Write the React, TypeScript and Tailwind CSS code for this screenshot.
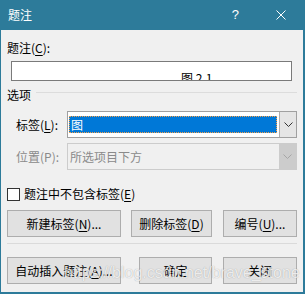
import type { ReactNode } from "react";

const ui = "font-['Noto_Sans_CJK_SC','Noto_Sans',sans-serif]";

function Key({ children }: { children: ReactNode }) {
  return <span className="underline underline-offset-[2px]">{children}</span>;
}

function Chevron({ color }: { color: string }) {
  return (
    <svg width="9" height="5" viewBox="0 0 9 5">
      <path d="M0.5 0.5 L4.5 4.5 L8.5 0.5" fill="none" stroke={color} strokeWidth="1" />
    </svg>
  );
}

function Btn({ className, children }: { className: string; children: ReactNode }) {
  return (
    <div
      className={`h-[27px] flex items-center justify-center bg-[#e1e1e1] border border-[#adadad] text-black ${className}`}
    >
      {children}
    </div>
  );
}

export default function App() {
  return (
    <div
      className={`relative w-[305px] h-[294px] bg-[#2d7b9a] flex flex-col text-[12px] leading-[16px] ${ui}`}
    >
      {/* Title bar */}
      <div className="h-[30px] flex items-center pl-[8px] pr-[19px] text-white">
        <span>题注</span>
        <span className="ml-auto text-[13px] font-['Liberation_Sans',sans-serif]">?</span>
        <svg className="ml-[37px]" width="10" height="10" viewBox="0 0 10 10">
          <path d="M0.5 0.5 L9.5 9.5 M9.5 0.5 L0.5 9.5" stroke="white" strokeWidth="1" />
        </svg>
      </div>

      {/* Body */}
      <div className="flex-1 ml-px mr-[2px] mb-[2px] bg-[#f0f0f0] pl-[6px] pr-[6px] pt-[10px] flex flex-col text-black">
        <div>
          题注(<Key>C</Key>):
        </div>
        <div className="mt-[5px] ml-[4px] mr-[5px] h-[20px] border border-[#7a7a7a] bg-white overflow-hidden pl-[169px] pt-[8px] whitespace-nowrap">
          图 2.1
        </div>

        {/* Options group */}
        <div className="mt-[6px] flex">
          <span>选项</span>
          <div className="flex-1 h-px bg-[#dcdcdc] mt-[5px] ml-[5px]" />
        </div>

        <div className="mt-[8px] pl-[9px] flex items-center">
          <span className="w-[51px]">
            标签(<Key>L</Key>):
          </span>
          <div className="flex-1 h-[27px] flex border border-[#a0a0a0] bg-white">
            <div className="flex-1 flex items-center pl-px pr-[2px]">
              <div className="w-full h-[17px] bg-[#0078d7] border border-dotted border-[#f5a04a] text-white pl-px flex items-center">
                图
              </div>
            </div>
            <div className="w-[17px] bg-[#e5e5e5] border-l border-[#adadad] flex items-center justify-center">
              <Chevron color="#333333" />
            </div>
          </div>
        </div>

        <div className="mt-[5px] pl-[9px] flex items-center text-[#8a8a8a]">
          <span className="w-[51px]">位置(P):</span>
          <div className="flex-1 h-[27px] flex border border-[#cccccc] bg-[#f0f0f0]">
            <div className="flex-1 flex items-center pl-[2px]">所选项目下方</div>
            <div className="w-[17px] bg-[#cccccc] flex items-center justify-center">
              <Chevron color="#a6a6a6" />
            </div>
          </div>
        </div>

        {/* Checkbox */}
        <div className="mt-[16px] flex items-center">
          <div className="w-[13px] h-[13px] border border-[#333333] bg-white" />
          <span className="ml-[4px]">
            题注中不包含标签(<Key>E</Key>)
          </span>
        </div>

        <div className="mt-[8px] flex">
          <Btn className="w-[114px]">
            新建标签(<Key>N</Key>)...
          </Btn>
          <Btn className="w-[81px] ml-[10px]">
            删除标签(<Key>D</Key>)
          </Btn>
          <Btn className="w-[74px] ml-[11px]">
            编号(<Key>U</Key>)...
          </Btn>
        </div>

        <div className="mt-[6px] h-px bg-[#dadada]" />

        <div className="mt-[13px] flex">
          <Btn className="w-[114px]">
            自动插入题注(<Key>A</Key>)...
          </Btn>
          <Btn className="w-[73px] ml-[18px]">确定</Btn>
          <Btn className="w-[74px] ml-[11px]">关闭</Btn>
        </div>
      </div>

      {/* Watermark */}
      <div className="absolute left-[64px] top-[264px] text-[16px] leading-[18px] font-['Liberation_Sans',sans-serif] text-white/80 [text-shadow:0_0_1px_rgba(0,0,0,0.35)] whitespace-nowrap">
        https://blog.csdn.net/brave_stone
      </div>
    </div>
  );
}
